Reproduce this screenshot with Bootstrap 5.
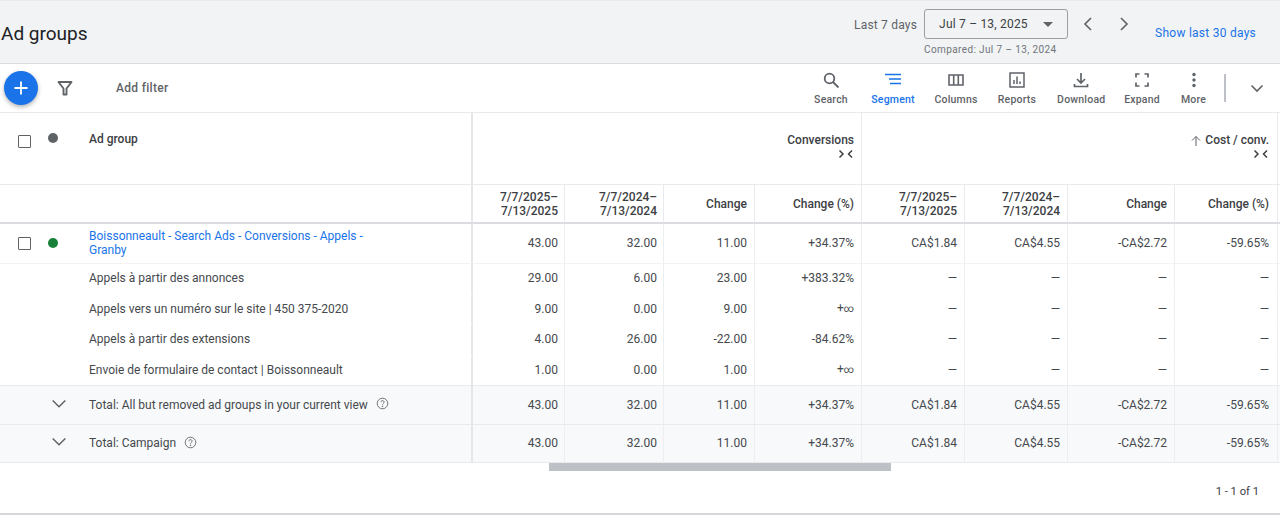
<!DOCTYPE html>
<html lang="en">

<head>
    <meta charset="UTF-8">
    <meta name="viewport" content="width=device-width, initial-scale=1.0">
    <title>Ad groups</title>
    <link href="https://cdn.jsdelivr.net/npm/bootstrap@5.3.3/dist/css/bootstrap.min.css" rel="stylesheet">
    <style>
        body {
            font-family: Roboto, "Liberation Sans", sans-serif;
            font-size: 12px;
            color: #45494d;
            background: #fff;
            overflow: hidden;
            height: 515px;
        }

        /* page header */
        .page-head {
            height: 64px;
            background: #f1f3f4;
            border-top: 1px solid #e8eaed;
            border-bottom: 1px solid #dadce0;
            padding-left: 1px;
        }

        .page-title {
            font-size: 19px;
            font-weight: 400;
            color: #202124;
            margin: 22px 0 0;
        }

        .range-label {
            color: #5f6368;
            font-size: 12px;
            letter-spacing: .2px;
            margin: 15px 7px 0 0;
        }

        .range-box {
            width: 144px;
            height: 30px;
            border: 1px solid #9aa0a6;
            border-radius: 3px;
            padding: 0 14px;
            font-size: 12px;
            letter-spacing: .2px;
            color: #3c4043;
        }

        .caret-down {
            width: 0;
            height: 0;
            border-left: 5px solid transparent;
            border-right: 5px solid transparent;
            border-top: 5px solid #5f6368;
        }

        .range-col {
            width: 144px;
            margin-top: 8px;
        }

        .compared {
            color: #70757a;
            font-size: 10px;
            letter-spacing: .38px;
            margin-top: 3px;
            white-space: nowrap;
        }

        .nav-arrows {
            gap: 18px;
            margin: 8px 0 0 11px;
            height: 30px;
        }

        .show-link {
            color: #1a73e8;
            text-decoration: none;
            font-size: 12px;
            letter-spacing: .25px;
            margin: 23px 24px 0 22px;
            white-space: nowrap;
        }

        /* toolbar */
        .tool-bar {
            height: 49px;
            border-bottom: 1px solid #e8eaed;
            padding-right: 15px;
        }

        .add-btn {
            width: 34px;
            height: 34px;
            margin-left: 4px;
            border-radius: 50%;
            background: #1a73e8;
            box-shadow: 0 2px 4px rgba(60, 64, 67, .4);
        }

        .filter-icon {
            margin-left: 18px;
        }

        .add-filter {
            margin-left: 42px;
            color: #5f6368;
            font-weight: 500;
            font-size: 12px;
            letter-spacing: .3px;
        }

        .tool-item {
            font-size: 10.5px;
            font-weight: 500;
            color: #5f6368;
            letter-spacing: .2px;
            text-align: center;
            white-space: nowrap;
            width: 60px;
            padding-top: 2px;
        }

        .tool-item svg {
            display: block;
            margin: 0 auto 3px;
        }

        .tool-active {
            color: #1a73e8;
        }

        .tool-sep {
            width: 2px;
            height: 28px;
            background: #bdc1c6;
            margin: 0 23px 0 5.5px;
        }

        /* grid */
        .ads-table {
            table-layout: fixed;
            width: 1280px;
            margin: 0;
            border-collapse: separate;
            border-spacing: 0;
            color: #45494d;
            font-size: 12px;
        }

        .ads-table th,
        .ads-table td {
            padding: 0 7px 0 6px;
            text-align: right;
            vertical-align: middle;
            border-bottom: 1px solid #f1f3f4;
            border-right: 1px solid #eceef0;
            line-height: 14px;
            white-space: nowrap;
            background: transparent;
            color: #45494d;
        }

        .ads-table th {
            font-weight: 500;
            color: #3c4043;
            border-right-color: #e8eaed;
        }

        .ads-table td.frozen,
        .ads-table th.frozen {
            text-align: left;
            white-space: normal;
            padding: 0;
            border-right: 2px solid #e4e6e9;
        }

        .ads-table td.no-line,
        .ads-table th.no-line {
            border-right: 0;
        }

        /* the first two and the last data columns sit a pixel off the others */
        .ads-table .head-low th:nth-child(2),
        .ads-table .head-low th:nth-child(3),
        .ads-table tbody td:nth-child(2),
        .ads-table tbody td:nth-child(3) {
            padding-right: 6px;
        }

        .ads-table .head-top th:nth-child(3),
        .ads-table .head-low th:nth-child(9),
        .ads-table tbody td:nth-child(9) {
            padding-right: 8px;
        }

        .head-top th {
            height: 72px;
            vertical-align: top;
            padding-top: 20px;
            border-bottom-color: #e8eaed;
        }

        .ads-table .head-top th.frozen {
            padding-top: 22px;
        }

        .head-low th {
            height: 39px;
            border-bottom: 2px solid #dadce0;
        }

        .ads-table .row-main td {
            height: 40px;
            padding-bottom: 1px;
        }

        .ads-table .row-sub td {
            height: 30.5px;
            padding-bottom: 1px;
            border-bottom-color: transparent;
        }

        .ads-table .row-sub:nth-last-child(3) td {
            border-bottom-color: #e8eaed;
        }

        .ads-table .row-total td {
            height: 38.5px;
            background: #f8f9fa;
            border-bottom-color: #e8eaed;
        }

        .name-cell {
            display: flex;
            align-items: center;
        }

        .check-box {
            width: 13px;
            height: 13px;
            border: 1.5px solid #5f6368;
            border-radius: 1px;
            margin-left: 18px;
            flex: none;
        }

        .status-dot {
            width: 10px;
            height: 10px;
            border-radius: 50%;
            margin-left: 17px;
            flex: none;
        }

        .name-text {
            margin-left: 31px;
            width: 290px;
        }

        .head-name {
            margin-top: -6px;
        }

        .ads-table td.name-plain {
            padding-left: 89px;
        }

        .name-link {
            color: #1a73e8;
            text-decoration: none;
            display: block;
        }

        .total-cell {
            display: flex;
            align-items: center;
            padding-left: 52px;
        }

        .total-cell .name-label {
            margin-left: 23px;
        }

        .help-icon {
            margin: -2px 0 0 8px;
            flex: none;
        }

        .total-chevron {
            margin-top: -2px;
            flex: none;
        }

        .sort-arrows {
            display: block;
            margin: 2px 0 0 auto;
        }

        .inf-mark {
            font-size: 10px;
        }

        .scroll-track {
            height: 8px;
        }

        .scroll-thumb {
            height: 8px;
            margin-left: 549px;
            background: #bdc1c6;
        }

        .pager {
            height: 44px;
            padding-right: 21px;
            border-bottom: 2px solid #d4d6d9;
            color: #3c4043;
            font-size: 11.2px;
        }
    </style>
</head>

<body>
    <!-- Title + date range -->
    <div class="page-head d-flex align-items-start justify-content-between">
        <h1 class="page-title">Ad groups</h1>
        <div class="d-flex align-items-start">
            <span class="range-label">Last 7 days</span>
            <div class="range-col">
                <div class="range-box d-flex align-items-center justify-content-between">
                    <span>Jul 7 – 13, 2025</span><span class="caret-down"></span>
                </div>
                <div class="compared">Compared: Jul 7 – 13, 2024</div>
            </div>
            <div class="nav-arrows d-flex align-items-center">
                <svg width="18" height="18" viewBox="0 0 18 18" fill="none" stroke="#5f6368" stroke-width="1.6"><path d="M12 3 6 9l6 6" /></svg>
                <svg width="18" height="18" viewBox="0 0 18 18" fill="none" stroke="#5f6368" stroke-width="1.6"><path d="M6 3l6 6-6 6" /></svg>
            </div>
            <a href="#" class="show-link">Show last 30 days</a>
        </div>
    </div>

    <!-- Toolbar -->
    <div class="tool-bar d-flex align-items-center">
        <div class="add-btn d-flex align-items-center justify-content-center">
            <svg width="16" height="16" viewBox="0 0 16 16" stroke="#fff" stroke-width="1.8"><path d="M8 1.500v13M1.500 8h13" /></svg>
        </div>
        <svg class="filter-icon" width="18" height="18" viewBox="0 0 18 18" fill="none" stroke="#5f6368" stroke-width="1.900"><path d="M2.500 3h13L10.500 9.500V15.500h-3V9.500z" stroke-linejoin="round" /></svg>
        <span class="add-filter">Add filter</span>
        <div class="d-flex align-items-center ms-auto">
            <div class="tool-item">
                <svg width="18" height="18" viewBox="0 0 18 18" fill="none" stroke="#5f6368" stroke-width="1.800"><circle cx="7.500" cy="7.500" r="4.800" /><path d="M11 11l5.500 5.500" /></svg>Search
            </div>
            <div class="tool-item tool-active" style="width:64px">
                <svg width="18" height="18" viewBox="0 0 18 18" fill="none" stroke="#1a73e8" stroke-width="1.600"><path d="M1 3.500h16M5 8h12M6 12.500h11" /></svg>Segment
            </div>
            <div class="tool-item" style="width:62px">
                <svg width="18" height="18" viewBox="0 0 18 18" fill="none" stroke="#5f6368" stroke-width="1.600"><path d="M2 4h14v10H2zM6.700 4v10M11.300 4v10" /></svg>Columns
            </div>
            <div class="tool-item" style="width:60px">
                <svg width="18" height="18" viewBox="0 0 18 18" fill="none" stroke="#5f6368" stroke-width="1.500"><path d="M2 2h14v14H2z" /><path d="M6 13V9M9 13V5.500M12 13v-2.500" /></svg>Reports
            </div>
            <div class="tool-item" style="width:68.500px">
                <svg width="18" height="18" viewBox="0 0 18 18" fill="none" stroke="#5f6368" stroke-width="1.700"><path d="M9 2v9.500M5 8l4 4 4-4M2.500 13v2.500h13V13" /></svg>Download
            </div>
            <div class="tool-item" style="width:53px">
                <svg width="18" height="18" viewBox="0 0 18 18" fill="none" stroke="#5f6368" stroke-width="1.700"><path d="M3 6.500V3h3.500M11.500 3H15v3.500M15 11.500V15h-3.500M6.500 15H3v-3.500" /></svg>Expand
            </div>
            <div class="tool-item" style="width:50px">
                <svg width="18" height="18" viewBox="0 0 18 18" fill="#5f6368"><circle cx="9" cy="3.500" r="1.700" /><circle cx="9" cy="9" r="1.700" /><circle cx="9" cy="14.500" r="1.700" /></svg>More
            </div>
            <div class="tool-sep"></div>
            <svg width="16" height="16" viewBox="0 0 16 16" fill="none" stroke="#5f6368" stroke-width="1.600"><path d="M2.500 5.500 8 11l5.500-5.500" /></svg>
        </div>
    </div>

    <!-- Ad group table -->
    <table class="table ads-table">
        <colgroup>
            <col style="width:473px">
            <col style="width:92px">
            <col style="width:99px">
            <col style="width:91px">
            <col style="width:107px">
            <col style="width:103px">
            <col style="width:103px">
            <col style="width:107px">
            <col style="width:103px">
            <col style="width:2px">
        </colgroup>
        <thead>
            <tr class="head-top">
                <th class="frozen">
                    <div class="name-cell">
                        <span class="check-box"></span>
                        <span class="status-dot" style="background:#5f6368;margin-top:-8px"></span>
                        <span class="name-text head-name">Ad group</span>
                    </div>
                </th>
                <th colspan="4">Conversions
                    <svg class="sort-arrows" width="16" height="10" viewBox="0 0 16 10" fill="none" stroke="#3c4043" stroke-width="1.500"><path d="M1.500 1.500 5 5 1.500 8.500M14 1.500 10.500 5 14 8.500" /></svg>
                </th>
                <th colspan="4">
                    <svg width="12" height="12" viewBox="0 0 12 12" fill="none" stroke="#5f6368" stroke-width="1"><path d="M6 11V1.500M2 5.500l4-4 4 4" /></svg>
                    Cost / conv.
                    <svg class="sort-arrows" width="16" height="10" viewBox="0 0 16 10" fill="none" stroke="#3c4043" stroke-width="1.500"><path d="M1.500 1.500 5 5 1.500 8.500M14 1.500 10.500 5 14 8.500" /></svg>
                </th>
                <th class="no-line"></th>
            </tr>
            <tr class="head-low">
                <th class="frozen"></th>
                <th>7/7/2025–<br>7/13/2025</th>
                <th>7/7/2024–<br>7/13/2024</th>
                <th>Change</th>
                <th>Change (%)</th>
                <th>7/7/2025–<br>7/13/2025</th>
                <th>7/7/2024–<br>7/13/2024</th>
                <th>Change</th>
                <th>Change (%)</th>
                <th class="no-line"></th>
            </tr>
        </thead>
        <tbody id="tableBody">
            <!-- filled in below -->
        </tbody>
    </table>

    <div class="scroll-track">
        <div class="scroll-thumb" style="width:342px"></div>
    </div>
    <div class="pager d-flex align-items-center justify-content-end">1 - 1 of 1</div>

    <script src="https://cdn.jsdelivr.net/npm/bootstrap@5.3.3/dist/js/bootstrap.bundle.min.js"></script>
    <script>
        const costs = ['CA$1.84', 'CA$4.55', '-CA$2.72', '-59.65%'];
        const dashes = ['—', '—', '—', '—'];
        const mainConv = ['43.00', '32.00', '11.00', '+34.37%'];
        const infinity = '+<span class="inf-mark">∞</span>';

        const helpIcon = `<svg class="help-icon" width="13" height="13" viewBox="0 0 13 13" fill="none" stroke="#5f6368" stroke-width=".9"><circle cx="6.500" cy="6.500" r="5.300"/><path d="M4.900 5.200c0-2.100 3.200-2.100 3.200-.1 0 1.300-1.600 1.300-1.600 2.600"/><circle cx="6.500" cy="9.300" r=".4"/></svg>`;
        const chevron = `<svg class="total-chevron" width="14" height="10" viewBox="0 0 14 10" fill="none" stroke="#5f6368" stroke-width="1.500"><path d="M.7 1.500 7 7.800l6.300-6.300"/></svg>`;

        const subRows = [
            ['Appels à partir des annonces', ['29.00', '6.00', '23.00', '+383.32%']],
            ['Appels vers un numéro sur le site | 450 375-2020', ['9.00', '0.00', '9.00', infinity]],
            ['Appels à partir des extensions', ['4.00', '26.00', '-22.00', '-84.62%']],
            ['Envoie de formulaire de contact | Boissonneault', ['1.00', '0.00', '1.00', infinity]],
        ];

        function cells(values) {
            return values.map(v => `<td>${v}</td>`).join('');
        }

        let html = `
            <tr class="row-main">
                <td class="frozen">
                    <div class="name-cell">
                        <span class="check-box"></span>
                        <span class="status-dot" style="background:#188038"></span>
                        <span class="name-text"><a href="#" class="name-link">Boissonneault - Search Ads - Conversions - Appels - Granby</a></span>
                    </div>
                </td>
                ${cells(mainConv)}${cells(costs)}<td class="no-line"></td>
            </tr>`;

        subRows.forEach(row => {
            html += `
            <tr class="row-sub">
                <td class="frozen name-plain">${row[0]}</td>
                ${cells(row[1])}${cells(dashes)}<td class="no-line"></td>
            </tr>`;
        });

        ['Total: All but removed ad groups in your current view', 'Total: Campaign'].forEach(label => {
            html += `
            <tr class="row-total">
                <td class="frozen">
                    <div class="total-cell">${chevron}<span class="name-label">${label}</span>${helpIcon}</div>
                </td>
                ${cells(mainConv)}${cells(costs)}<td class="no-line"></td>
            </tr>`;
        });

        document.getElementById('tableBody').innerHTML = html;
    </script>
</body>

</html>
